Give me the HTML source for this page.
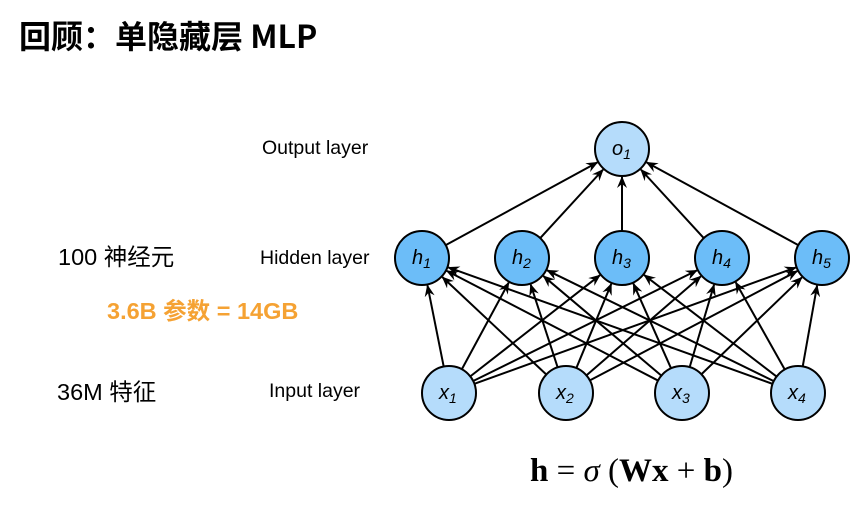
<!DOCTYPE html>
<html><head><meta charset="utf-8"><style>
body{margin:0;width:865px;height:505px;background:#fff;position:relative;overflow:hidden;font-family:"Liberation Sans","Noto Sans CJK SC",sans-serif}
.t{position:absolute;white-space:nowrap;line-height:1}
</style></head><body>
<div class="t" style="left:19px;top:19px;font-size:32px;font-weight:bold;font-family:'Noto Sans CJK SC','Liberation Sans',sans-serif">回顾：单隐藏层 MLP</div>
<div class="t" style="left:262px;top:139px;font-size:19.5px">Output layer</div>
<div class="t" style="left:260px;top:249px;font-size:19.5px">Hidden layer</div>
<div class="t" style="left:269px;top:382px;font-size:19.5px">Input layer</div>
<div class="t" style="left:58px;top:246px;font-size:23.5px">100 神经元</div>
<div class="t" style="left:107px;top:300px;font-size:23.5px;font-weight:bold;color:#f5a233">3.6B 参数 = 14GB</div>
<div class="t" style="left:57px;top:381px;font-size:23.5px">36M 特征</div>
<div class="t" style="left:530px;top:455px;font-size:33px;font-family:'Liberation Serif',serif"><b>h</b> = <i>σ</i> (<b>Wx</b> + <b>b</b>)</div>
<svg id="s" width="865" height="505" style="position:absolute;left:0;top:0">
<defs><marker id="a" markerWidth="12" markerHeight="10" refX="11" refY="5" orient="auto" markerUnits="userSpaceOnUse"><path d="M0,0 L12,5 L0,10 L4,5 Z" fill="#000"/></marker></defs>
<g id="L" stroke="#000" stroke-width="2"></g><g id="N"></g>
</svg>
<script>
var R=27,ns="http://www.w3.org/2000/svg";
var o=[[622,149]],h=[[422,258],[522,258],[622,258],[722,258],[822,258]],x=[[449,393],[566,393],[682,393],[798,393]];
var L=document.getElementById('L'),N=document.getElementById('N');
function ln(a,b){var dx=b[0]-a[0],dy=b[1]-a[1],d=Math.hypot(dx,dy),ux=dx/d,uy=dy/d;
var e=document.createElementNS(ns,'line');e.setAttribute('x1',a[0]+ux*R);e.setAttribute('y1',a[1]+uy*R);e.setAttribute('x2',b[0]-ux*(R+1));e.setAttribute('y2',b[1]-uy*(R+1));e.setAttribute('marker-end','url(#a)');L.appendChild(e);}
x.forEach(function(a){h.forEach(function(b){ln(a,b)})});
h.forEach(function(a){ln(a,o[0])});
function nd(p,f,lab,sub){var c=document.createElementNS(ns,'circle');c.setAttribute('cx',p[0]);c.setAttribute('cy',p[1]);c.setAttribute('r',R);c.setAttribute('fill',f);c.setAttribute('stroke','#000');c.setAttribute('stroke-width','2');N.appendChild(c);
var t=document.createElementNS(ns,'text');t.setAttribute('x',p[0]-10);t.setAttribute('y',p[1]+6);t.setAttribute('font-family','Liberation Sans,sans-serif');t.setAttribute('font-size','20');t.setAttribute('font-style','italic');t.innerHTML=lab+'<tspan dy="4" font-size="14">'+sub+'</tspan>';N.appendChild(t);}
nd(o[0],'#b5dcfb','o',1);
h.forEach(function(p,i){nd(p,'#6cbdf8','h',i+1)});
x.forEach(function(p,i){nd(p,'#b5dcfb','x',i+1)});
</script>
</body></html>
